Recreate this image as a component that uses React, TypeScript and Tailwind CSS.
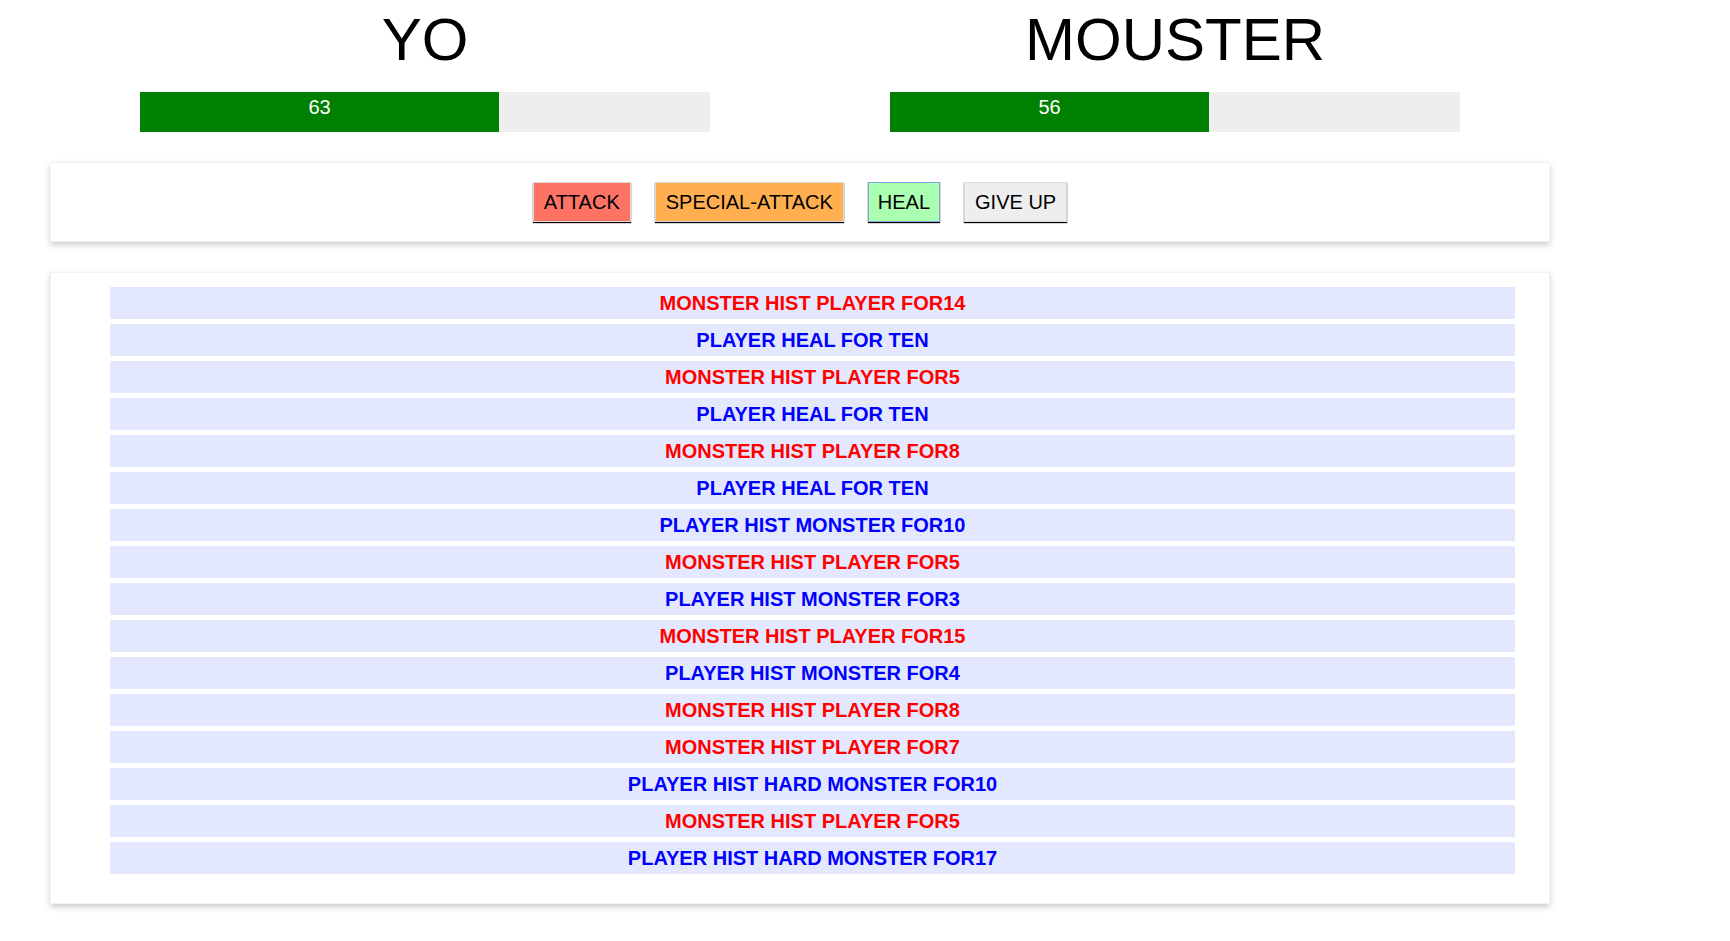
import React from 'react';

type Turn = { isPlayer: boolean; text: string };

const turns: Turn[] = [
    { isPlayer: false, text: 'Monster hist player for14' },
    { isPlayer: true, text: 'Player heal for ten' },
    { isPlayer: false, text: 'Monster hist player for5' },
    { isPlayer: true, text: 'Player heal for ten' },
    { isPlayer: false, text: 'Monster hist player for8' },
    { isPlayer: true, text: 'Player heal for ten' },
    { isPlayer: true, text: 'Player hist monster for10' },
    { isPlayer: false, text: 'Monster hist player for5' },
    { isPlayer: true, text: 'Player hist monster for3' },
    { isPlayer: false, text: 'Monster hist player for15' },
    { isPlayer: true, text: 'Player hist monster for4' },
    { isPlayer: false, text: 'Monster hist player for8' },
    { isPlayer: false, text: 'Monster hist player for7' },
    { isPlayer: true, text: 'Player hist hard monster for10' },
    { isPlayer: false, text: 'Monster hist player for5' },
    { isPlayer: true, text: 'Player hist hard monster for17' },
];

function HealthBar({ name, health }: { name: string; health: number }) {
    return (
        <div className="w-[750px] text-center">
            <h1 className="mt-[5px] text-[60px] leading-[69px] font-normal text-black">{name}</h1>
            <div className="mx-auto mt-[18px] h-[40px] w-[570px] bg-[#eeeeee]">
                <div
                    className="h-full bg-[#008000] text-center text-[20px] leading-[30px] text-white"
                    style={{ width: `${health}%` }}
                >
                    {health}
                </div>
            </div>
        </div>
    );
}

export default function App() {
    return (
        <div className="min-h-screen bg-white font-['Liberation_Sans',Arial,sans-serif]">
            <div className="ml-[50px] w-[1500px]">
                {/* Health bars */}
                <div className="flex">
                    <HealthBar name="YO" health={63} />
                    <HealthBar name="MOUSTER" health={56} />
                </div>

                {/* Controls */}
                <div className="mt-[30px] flex h-[80px] items-center justify-center gap-[24px] border border-[#f2f2f2] shadow-[0_3px_6px_#cccccc]">
                    <button className="h-[40px] border border-[#d8d8d8] bg-[#ff7367] px-[10px] text-[20px] text-black shadow-[0_1px_1px_#000]">
                        ATTACK
                    </button>
                    <button className="h-[40px] border border-[#d8d8d8] bg-[#ffaf4f] px-[10px] text-[20px] text-black shadow-[0_1px_1px_#000]">
                        SPECIAL-ATTACK
                    </button>
                    <button className="h-[40px] border border-[#7fa6dd] bg-[#aaffb0] px-[9px] text-[20px] text-black shadow-[0_1px_1px_#000]">
                        HEAL
                    </button>
                    <button className="h-[40px] border border-[#d8d8d8] bg-[#eeeeee] px-[10px] text-[20px] text-black shadow-[0_1px_1px_#000]">
                        GIVE UP
                    </button>
                </div>

                {/* Log */}
                <div className="mt-[30px] border border-[#f2f2f2] pt-[14px] pb-[29px] pl-[59px] pr-[34px] shadow-[0_3px_6px_#cccccc]">
                    <ul className="flex flex-col gap-[5px] text-[20px] font-bold uppercase">
                        {turns.map((turn, i) => (
                            <li
                                key={i}
                                className={
                                    turn.isPlayer
                                        ? 'flex h-[32px] items-center justify-center bg-[#e4e8ff] text-[#0000ff]'
                                        : 'flex h-[32px] items-center justify-center bg-[#e4e8ff] text-[#ff0000]'
                                }
                            >
                                {turn.text}
                            </li>
                        ))}
                    </ul>
                </div>
            </div>
        </div>
    );
}
